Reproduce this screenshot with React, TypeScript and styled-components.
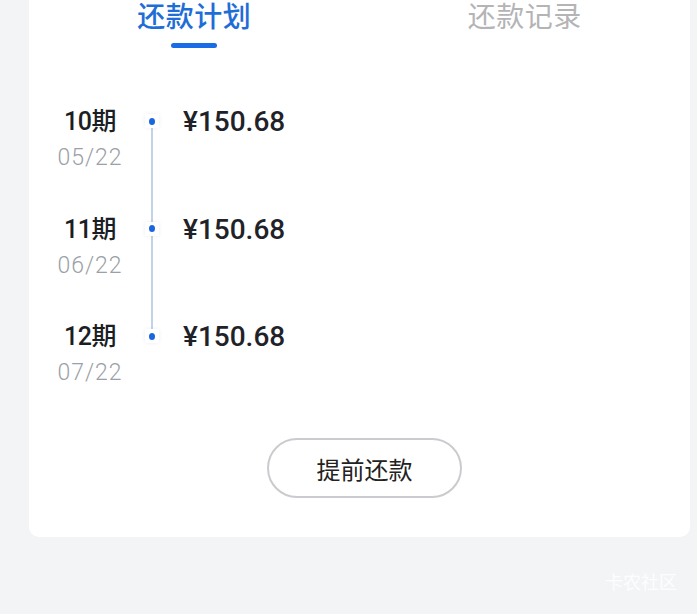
import React from "react";
import styled, { createGlobalStyle } from "styled-components";

const plans = [
  { term: "10期", date: "05/22", amount: "¥150.68" },
  { term: "11期", date: "06/22", amount: "¥150.68" },
  { term: "12期", date: "07/22", amount: "¥150.68" },
];

const GlobalStyle = createGlobalStyle`
  html, body {
    margin: 0;
    padding: 0;
    background: #f3f4f6;
    overflow: hidden;
  }
  body {
    font-family: "Noto Sans CJK SC", "Noto Sans", Roboto, sans-serif;
  }
`;

const App = () => {
  return (
    <>
      <GlobalStyle />
      <Page>
        <Card>
          <Tabs>
            <Tab>
              <TabLabel $active>还款计划</TabLabel>
              <TabBar $active />
            </Tab>
            <Tab>
              <TabLabel>还款记录</TabLabel>
              <TabBar />
            </Tab>
          </Tabs>

          <Timeline>
            {plans.map((p, i) => (
              <Row key={p.term}>
                <TermCol>
                  <Term>{p.term}</Term>
                  <DateText>{p.date}</DateText>
                </TermCol>
                <DotCol $last={i === plans.length - 1}>
                  <Dot />
                </DotCol>
                <Amount>{p.amount}</Amount>
              </Row>
            ))}
          </Timeline>

          <ButtonWrap>
            <PrepayButton>提前还款</PrepayButton>
          </ButtonWrap>
        </Card>
        <Watermark>卡农社区</Watermark>
      </Page>
    </>
  );
};

const Page = styled.div`
  width: 697px;
  height: 614px;
  display: flex;
  flex-direction: column;
`;

const Card = styled.div`
  margin: -20px 7px 0 29px;
  padding: 20px 0 39px;
  background: #ffffff;
  border-radius: 10px;
  display: flex;
  flex-direction: column;
`;

const Tabs = styled.div`
  display: grid;
  grid-template-columns: 1fr 1fr;
`;

const Tab = styled.div`
  display: flex;
  flex-direction: column;
  align-items: center;
`;

const TabLabel = styled.div<{ $active?: boolean }>`
  font-size: 28px;
  line-height: 30px;
  font-weight: ${(p) => (p.$active ? 500 : 400)};
  color: ${(p) => (p.$active ? "#1f6dd6" : "#b4b4b6")};
  letter-spacing: 0.5px;
`;

const TabBar = styled.div<{ $active?: boolean }>`
  margin-top: 13px;
  width: 46px;
  height: 5px;
  border-radius: 3px;
  background: ${(p) => (p.$active ? "#1a6ce6" : "transparent")};
`;

const Timeline = styled.div`
  padding-top: 57px;
  display: flex;
  flex-direction: column;
  gap: 45.5px;
`;

const Row = styled.div`
  display: flex;
  align-items: flex-start;
  height: 62px;
`;

const TermCol = styled.div`
  width: 80px;
  margin-left: 21px;
  display: flex;
  flex-direction: column;
  align-items: center;
`;

const Term = styled.div`
  padding-top: 1px;
  font-family: Roboto, "Noto Sans CJK SC", sans-serif;
  font-size: 25px;
  line-height: 32px;
  font-weight: 500;
  color: #1b1e22;
  letter-spacing: -0.5px;
`;

const DateText = styled.div`
  margin-top: 5px;
  font-family: Roboto, "Noto Sans CJK SC", sans-serif;
  font-size: 23px;
  line-height: 30px;
  font-weight: 300;
  color: #9b9fa7;
  letter-spacing: 1px;
`;

const DotCol = styled.div<{ $last?: boolean }>`
  position: relative;
  width: 44px;
  height: 32px;
  display: flex;
  align-items: center;
  justify-content: center;

  &::before {
    content: "";
    display: ${(p) => (p.$last ? "none" : "block")};
    position: absolute;
    left: 21px;
    top: 16px;
    width: 2px;
    height: 107.5px;
    background: #c0d3e8;
  }
`;

const Dot = styled.div`
  position: relative;
  z-index: 1;
  width: 14px;
  height: 14px;
  background: #ffffff;
  box-shadow: 0 0 4px rgba(0, 0, 0, 0.07);
  display: flex;
  align-items: center;
  justify-content: center;

  &::after {
    content: "";
    width: 6px;
    height: 7px;
    border-radius: 50%;
    background: #1a66e0;
  }
`;

const Amount = styled.div`
  margin-left: 9px;
  padding-top: 1px;
  font-family: Roboto, "Noto Sans CJK SC", sans-serif;
  font-size: 28px;
  line-height: 32px;
  font-weight: 500;
  color: #1f2329;
`;

const ButtonWrap = styled.div`
  margin-top: 56px;
  padding-left: 10px;
  display: flex;
  justify-content: center;
`;

const PrepayButton = styled.button`
  width: 195px;
  height: 60px;
  border: 2px solid #cbcbcf;
  border-radius: 30px;
  background: #ffffff;
  font-family: "Noto Sans CJK SC", sans-serif;
  font-size: 24px;
  color: #222222;
  padding: 0;
  cursor: pointer;
`;

const Watermark = styled.div`
  margin-top: 33px;
  align-self: flex-end;
  padding-right: 20px;
  font-size: 18px;
  line-height: 22px;
  color: rgba(255, 255, 255, 0.9);
`;

export default App;
